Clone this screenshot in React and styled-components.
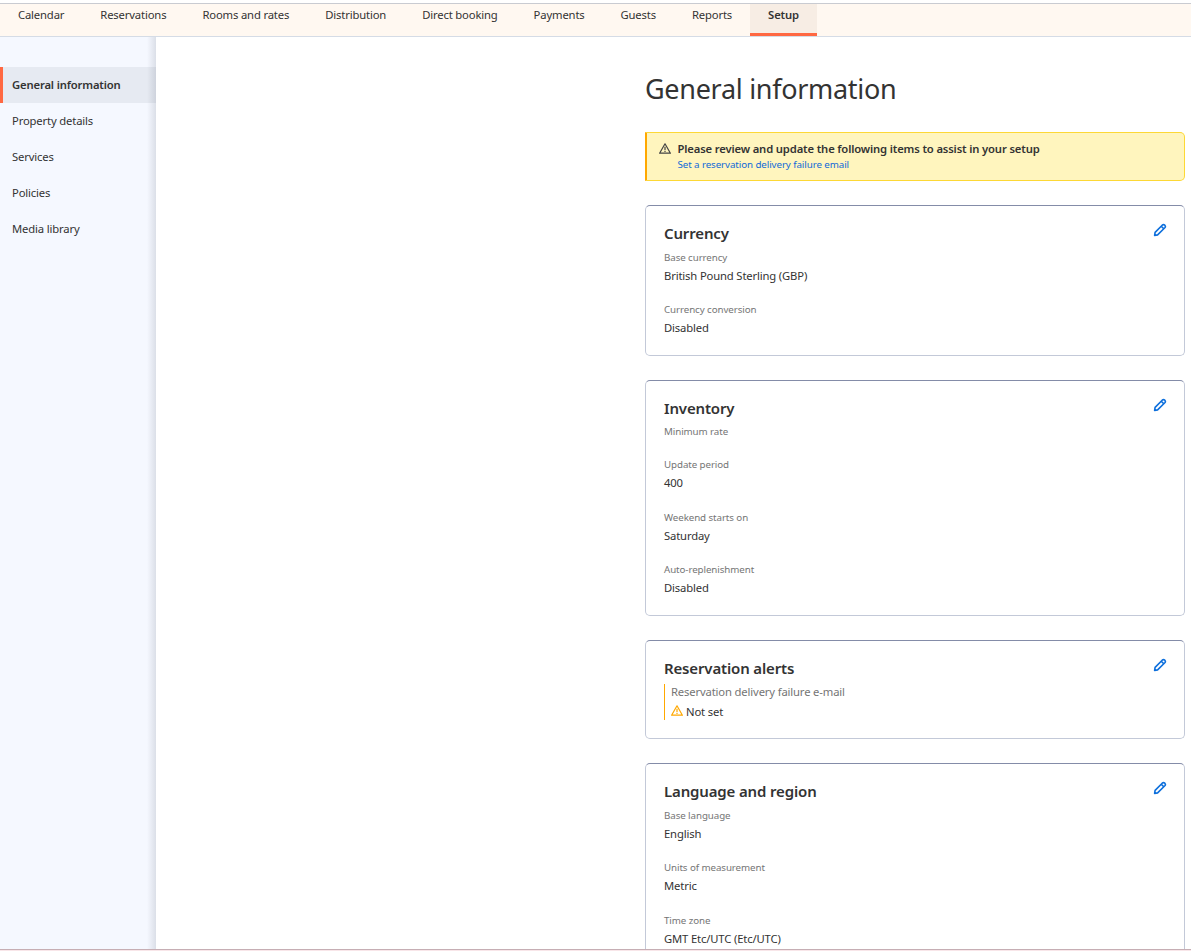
import React from 'react';
import styled, { createGlobalStyle, css } from 'styled-components';

const GlobalStyle = createGlobalStyle`
  *, *::before, *::after { box-sizing: border-box; }
  body {
    margin: 0;
    background: #fff;
    color: #333;
    font-family: 'Noto Sans', sans-serif;
    font-size: 11.25px;
    letter-spacing: -0.15px;
  }
  h1, h2, p, ul, dl, dd { margin: 0; padding: 0; }
  a { text-decoration: none; color: inherit; }
`;

const Page = styled.div`
  display: flex;
  flex-direction: column;
  height: 951px;
  overflow: hidden;
  padding-top: 3px;
`;

const TopNav = styled.nav`
  display: flex;
  flex: none;
  height: 34px;
  background: #fff8f1;
  border-top: 1px solid #c9cbd1;
  border-bottom: 1px solid #d5dce6;
`;

const NavItem = styled.a`
  height: 32px;
  padding: 0 18px;
  line-height: 22px;
  white-space: nowrap;
  ${({ $active }) => $active && css`
    font-weight: 600;
    background: #f7ede4;
    border-bottom: 3px solid #ff6842;
  `}
`;

const Body = styled.div`
  display: flex;
  flex: 1;
  min-height: 0;
`;

const Sidebar = styled.aside`
  flex: none;
  width: 156px;
  padding-top: 30px;
  background: #f5f8ff;
  position: relative;
  &::after {
    content: '';
    position: absolute;
    inset: 0 0 0 auto;
    width: 9px;
    background: linear-gradient(to right, rgba(60, 70, 90, 0), rgba(60, 70, 90, 0.14));
  }
`;

const SideItem = styled.a`
  display: block;
  height: 36px;
  line-height: 36px;
  padding-left: 9px;
  border-left: 3px solid transparent;
  ${({ $active }) => $active && css`
    font-weight: 600;
    background: #e6eaf2;
    border-left-color: #ff6842;
  `}
`;

const Main = styled.main`
  flex: 1;
  display: flex;
  justify-content: flex-end;
  padding: 33px 6px 0 0;
  overflow: hidden;
`;

const Content = styled.div`
  width: 540px;
`;

const PageTitle = styled.h1`
  font-size: 27px;
  font-weight: 400;
  line-height: 37px;
  letter-spacing: -0.3px;
  margin-bottom: 25px;
`;

const Notice = styled.div`
  display: flex;
  height: 49px;
  padding: 8px 12px 0 11.5px;
  border: 1px solid #fdd835;
  border-left: 2px solid #ffa800;
  border-radius: 0 5px 5px 0;
  background: #fff5be;
  margin-bottom: 24px;
`;

const NoticeIcon = styled.span`
  flex: none;
  width: 19px;
  padding-top: 2px;
  line-height: 0;
`;

const NoticeTitle = styled.p`
  font-weight: 600;
  line-height: 15px;
`;

const NoticeLink = styled.a`
  && { color: #0f69d8; }
  display: block;
  margin-top: 1px;
  font-size: 9.75px;
  line-height: 16px;
  letter-spacing: -0.08px;
`;

const Card = styled.section`
  height: ${({ $height }) => $height}px;
  margin-bottom: 24px;
  padding: 17px 17px 0 18px;
  border: 1px solid #c3c9d8;
  border-top-color: #848ca8;
  border-radius: 5px;
`;

const CardHeader = styled.header`
  display: flex;
  justify-content: space-between;
  height: ${({ $height }) => $height}px;
`;

const CardTitle = styled.h2`
  font-size: 15px;
  font-weight: 600;
  line-height: 20px;
`;

const EditButton = styled.button`
  width: 14px;
  height: 14px;
  padding: 0;
  border: 0;
  background: none;
  color: #0d6fdc;
  line-height: 0;
`;

const Field = styled.div`
  margin-bottom: 15px;
`;

const Label = styled.div`
  color: #757575;
  font-size: 9.75px;
  line-height: 18px;
  letter-spacing: -0.08px;
`;

const Value = styled.div`
  padding-bottom: 1.1px;
  margin-top: -0.9px;
  line-height: 19.3px;
`;

const Alert = styled.div`
  height: 36px;
  padding-left: 6px;
  border-left: 1px solid #ffa800;
`;

const AlertLabel = styled.div`
  color: #757575;
  line-height: 15px;
`;

const AlertValue = styled.div`
  display: flex;
  gap: 3px;
  margin-top: 2px;
  line-height: 22px;
  svg { margin-top: 4px; }
`;

const BottomEdge = styled.div`
  flex: none;
  height: 2px;
  background: #f8e6e9;
  border-top: 1px solid #c6aeb4;
`;

const WarningIcon = ({ color, strokeWidth = 1.2 }) => (
  <svg width="12" height="11" viewBox="0 0 12 11" fill="none" stroke={color} strokeWidth={strokeWidth} strokeLinejoin="round">
    <path d="M6 .8 11.4 10.2H.6Z" />
    <path d="M6 3.8v3.4M6 8v1" />
  </svg>
);

const PencilIcon = () => (
  <svg width="14" height="14" viewBox="0 0 14 14" fill="none" stroke="currentColor" strokeWidth="1.6" strokeLinejoin="round">
    <path d="M1.6 12.4 2.1 9.4 9.2 2.2Q10.5 1 11.8 2.2 13 3.5 11.8 4.8L4.6 11.9Z" />
    <path d="M8.2 3.2 10.8 5.8" />
  </svg>
);

const NAV = ['Calendar', 'Reservations', 'Rooms and rates', 'Distribution', 'Direct booking', 'Payments', 'Guests', 'Reports', 'Setup'];
const SIDE = ['General information', 'Property details', 'Services', 'Policies', 'Media library'];

const InfoCard = ({ title, height, headerHeight = 25.6, fields, children }) => (
  <Card $height={height}>
    <CardHeader $height={headerHeight}>
      <CardTitle>{title}</CardTitle>
      <EditButton aria-label={`Edit ${title}`}><PencilIcon /></EditButton>
    </CardHeader>
    {fields && fields.map(([label, value]) => (
      <Field key={label}>
        <Label>{label}</Label>
        {value && <Value>{value}</Value>}
      </Field>
    ))}
    {children}
  </Card>
);

export default function App() {
  return (
    <>
      <GlobalStyle />
      <Page>
        <TopNav>
          {NAV.map((n) => <NavItem key={n} $active={n === 'Setup'}>{n}</NavItem>)}
        </TopNav>
        <Body>
          <Sidebar>
            {SIDE.map((s, i) => <SideItem key={s} $active={i === 0}>{s}</SideItem>)}
          </Sidebar>
          <Main>
            <Content>
              <PageTitle>General information</PageTitle>
              <Notice>
                <NoticeIcon><WarningIcon color="#444" /></NoticeIcon>
                <div>
                  <NoticeTitle>Please review and update the following items to assist in your setup</NoticeTitle>
                  <NoticeLink>Set a reservation delivery failure email</NoticeLink>
                </div>
              </Notice>
              <InfoCard
                title="Currency"
                height={151}
                fields={[['Base currency', 'British Pound Sterling (GBP)'], ['Currency conversion', 'Disabled']]}
              />
              <InfoCard
                title="Inventory"
                height={236}
                headerHeight={25.2}
                fields={[['Minimum rate', null], ['Update period', '400'], ['Weekend starts on', 'Saturday'], ['Auto-replenishment', 'Disabled']]}
              />
              <InfoCard title="Reservation alerts" height={99} headerHeight={26}>
                <Alert>
                  <AlertLabel>Reservation delivery failure e-mail</AlertLabel>
                  <AlertValue><WarningIcon color="#ffa800" />Not set</AlertValue>
                </Alert>
              </InfoCard>
              <InfoCard
                title="Language and region"
                height={204}
                fields={[['Base language', 'English'], ['Units of measurement', 'Metric'], ['Time zone', 'GMT Etc/UTC (Etc/UTC)']]}
              />
            </Content>
          </Main>
        </Body>
        <BottomEdge />
      </Page>
    </>
  );
}
